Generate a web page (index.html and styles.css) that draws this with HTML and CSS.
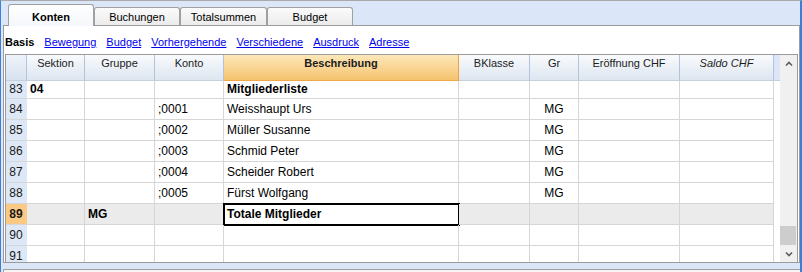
FILE: index.html
```html
<!DOCTYPE html>
<html lang="de">
<head>
    <meta charset="UTF-8">
    <title>Konten</title>
    <link rel="stylesheet" href="styles.css">
</head>
<body>
    <div class="tabs">
        <div class="tab tab-active">Konten</div>
        <div class="tab">Buchungen</div>
        <div class="tab tab-wide">Totalsummen</div>
        <div class="tab">Budget</div>
    </div>

    <div class="panel">
        <div class="views">
            <b>Basis</b>
            <a href="#">Bewegung</a>
            <a href="#">Budget</a>
            <a href="#">Vorhergehende</a>
            <a href="#">Verschiedene</a>
            <a href="#">Ausdruck</a>
            <a href="#">Adresse</a>
        </div>

        <div class="grid">
            <div class="sheet">
                <div class="head">
                    <div class="hcell hnum"></div>
                    <div class="hcell">Sektion</div>
                    <div class="hcell">Gruppe</div>
                    <div class="hcell">Konto</div>
                    <div class="hcell hsel">Beschreibung</div>
                    <div class="hcell">BKlasse</div>
                    <div class="hcell">Gr</div>
                    <div class="hcell">Eröffnung CHF</div>
                    <div class="hcell hitalic">Saldo CHF</div>
                    <div class="hfill"></div>
                </div>

                <div class="row row-first">
                    <div class="cell num">83</div>
                    <div class="cell bold">04</div>
                    <div class="cell"></div>
                    <div class="cell"></div>
                    <div class="cell bold">Mitgliederliste</div>
                    <div class="cell"></div>
                    <div class="cell"></div>
                    <div class="cell"></div>
                    <div class="cell"></div>
                </div>
                <div class="row">
                    <div class="cell num">84</div>
                    <div class="cell"></div>
                    <div class="cell"></div>
                    <div class="cell">;0001</div>
                    <div class="cell">Weisshaupt Urs</div>
                    <div class="cell"></div>
                    <div class="cell center">MG</div>
                    <div class="cell"></div>
                    <div class="cell"></div>
                </div>
                <div class="row">
                    <div class="cell num">85</div>
                    <div class="cell"></div>
                    <div class="cell"></div>
                    <div class="cell">;0002</div>
                    <div class="cell">Müller Susanne</div>
                    <div class="cell"></div>
                    <div class="cell center">MG</div>
                    <div class="cell"></div>
                    <div class="cell"></div>
                </div>
                <div class="row">
                    <div class="cell num">86</div>
                    <div class="cell"></div>
                    <div class="cell"></div>
                    <div class="cell">;0003</div>
                    <div class="cell">Schmid Peter</div>
                    <div class="cell"></div>
                    <div class="cell center">MG</div>
                    <div class="cell"></div>
                    <div class="cell"></div>
                </div>
                <div class="row">
                    <div class="cell num">87</div>
                    <div class="cell"></div>
                    <div class="cell"></div>
                    <div class="cell">;0004</div>
                    <div class="cell">Scheider Robert</div>
                    <div class="cell"></div>
                    <div class="cell center">MG</div>
                    <div class="cell"></div>
                    <div class="cell"></div>
                </div>
                <div class="row">
                    <div class="cell num">88</div>
                    <div class="cell"></div>
                    <div class="cell"></div>
                    <div class="cell">;0005</div>
                    <div class="cell">Fürst Wolfgang</div>
                    <div class="cell"></div>
                    <div class="cell center">MG</div>
                    <div class="cell"></div>
                    <div class="cell"></div>
                </div>
                <!-- current row -->
                <div class="row row-cur">
                    <div class="cell num num-cur">89</div>
                    <div class="cell"></div>
                    <div class="cell bold">MG</div>
                    <div class="cell"></div>
                    <div class="cell bold sel">Totale Mitglieder</div>
                    <div class="cell"></div>
                    <div class="cell"></div>
                    <div class="cell"></div>
                    <div class="cell"></div>
                </div>
                <div class="row">
                    <div class="cell num">90</div>
                    <div class="cell"></div>
                    <div class="cell"></div>
                    <div class="cell"></div>
                    <div class="cell"></div>
                    <div class="cell"></div>
                    <div class="cell"></div>
                    <div class="cell"></div>
                    <div class="cell"></div>
                </div>
                <div class="row">
                    <div class="cell num">91</div>
                    <div class="cell"></div>
                    <div class="cell"></div>
                    <div class="cell"></div>
                    <div class="cell"></div>
                    <div class="cell"></div>
                    <div class="cell"></div>
                    <div class="cell"></div>
                    <div class="cell"></div>
                </div>
            </div>

            <div class="scroll">
                <div class="scroll-btn">
                    <svg width="8" height="6" viewBox="0 0 8 6"><polyline points="1,4.5 4,1.5 7,4.5" fill="none" stroke="#5c5c5c" stroke-width="1.6"/></svg>
                </div>
                <div class="scroll-track">
                    <div class="scroll-thumb"></div>
                </div>
                <div class="scroll-btn">
                    <svg width="8" height="6" viewBox="0 0 8 6"><polyline points="1,1.5 4,4.5 7,1.5" fill="none" stroke="#5c5c5c" stroke-width="1.6"/></svg>
                </div>
            </div>
        </div>
    </div>

    <div class="status"></div>
</body>
</html>
```
FILE: styles.css
```css
*{
    box-sizing: border-box;
}
body{
    margin: 0;
    width: 802px;
    height: 272px;
    overflow: hidden;
    background-color: #dbe6f8;
    border-top: 1px solid #a9a9a9;
    border-left: 1px solid #3b80d6;
    border-right: 2px solid #3b80d6;
    font-family: "Liberation Sans", Arial, sans-serif;
    font-size: 11px;
    color: #000;
}

/* tab bar */
.tabs{
    display: flex;
    align-items: flex-end;
    height: 24px;
    padding-left: 7px;
}
.tab{
    width: 86px;
    height: 18px;
    padding-top: 3px;
    line-height: 13px;
    text-align: center;
    border: 1px solid #a0a0a0;
    border-bottom: none;
    border-radius: 3px 3px 0 0;
    background: linear-gradient(#fbfbfb, #ebebeb);
}
.tab-wide{
    width: 87px;
}
.tab-active{
    height: 22px;
    margin-bottom: -1px;
    padding-top: 6px;
    font-weight: bold;
    background: linear-gradient(#ffffff, #f4f7fb);
    position: relative;
    z-index: 1;
}

/* main panel */
.panel{
    margin-left: 2px;
    height: 238px;
    background-color: #fff;
    border: 1px solid #9b9b9b;
}
.views{
    display: flex;
    gap: 10px;
    height: 28px;
    padding: 8px 0 0 1px;
    line-height: 16px;
}
.views a{
    color: #0000f0;
    text-decoration: underline;
}

.grid{
    display: flex;
    height: 208px;
    margin: 0 1px;
    border: 1px solid #9b9b9b;
    border-bottom: none;
}
.sheet{
    width: 774px;
    overflow: hidden;
}
.head,
.row{
    display: grid;
    grid-template-columns: 21px 58px 70px 69px 235px 71px 49px 101px 94px;
}
.head{
    grid-template-columns: 21px 58px 70px 69px 235px 71px 49px 101px 94px 6px;
    height: 26px;
}
.hcell{
    padding-top: 2px;
    line-height: 13px;
    text-align: center;
    color: #1c1c1c;
    white-space: nowrap;
    border-right: 1px solid #b3c4da;
    border-bottom: 1px solid #c6d0dd;
    background: linear-gradient(#f9fbfd, #dde5f0);
}
.hnum{
    background: linear-gradient(#eef3fa, #d8e2f0);
}
.hsel{
    font-weight: bold;
    border-right-color: #efa040;
    border-bottom-color: #f0a848;
    background: linear-gradient(#fce7b9, #f5c36e);
}
.hitalic{
    font-style: italic;
}
.hfill{
    background-color: #dce6f8;
    border-bottom: 1px solid #c6d0dd;
}

/* rows */
.row{
    height: 21px;
}
.row-first{
    height: 18px;
}
.cell{
    padding: 0 3px;
    font-size: 12px;
    line-height: 20px;
    white-space: nowrap;
    overflow: hidden;
    border-right: 1px solid #d6d6d6;
    border-bottom: 1px solid #d6d6d6;
}
.row-first .cell{
    line-height: 17px;
}
.bold{
    font-weight: bold;
}
.center{
    text-align: center;
}
.num{
    padding: 0;
    text-align: center;
    color: #1a1a1a;
    background-color: #dde7f5;
    border-right-color: #dde7f5;
}
.row-cur .cell{
    background-color: #ebebeb;
}
.row-cur .num-cur{
    font-weight: bold;
    background-color: #fac984;
    border-right-color: #fac984;
}
.row-cur .sel{
    background-color: #fff;
    outline: 2px solid #000;
    outline-offset: -1px;
}

/* scrollbar */
.scroll{
    width: 17px;
    display: flex;
    flex-direction: column;
    background-color: #f0f0f0;
}
.scroll-btn{
    height: 17px;
    display: flex;
    align-items: center;
    justify-content: center;
}
.scroll-track{
    flex: 1;
    display: flex;
    flex-direction: column;
    justify-content: flex-end;
}
.scroll-thumb{
    height: 19px;
    margin-right: 1px;
    background-color: #cdcdcd;
}

.status{
    margin: 6px 0 0 2px;
    height: 3px;
    border-top: 1px solid #a0a0a0;
    border-left: 1px solid #a0a0a0;
    background-color: #f5f5f5;
}
```
